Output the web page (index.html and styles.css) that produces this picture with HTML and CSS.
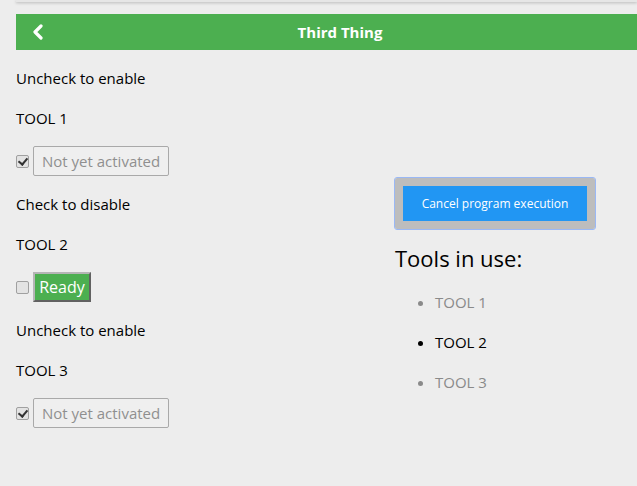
FILE: index.html
```html
<!DOCTYPE html>
<html>
<head>
<meta charset="utf-8">
<link rel="stylesheet" href="styles.css">
</head>
<body>
<div class="topstrip"></div>
<header class="header">
  <svg class="back" width="12" height="16" viewBox="0 0 12 16"><polyline points="9,2 3,8 9,14" fill="none" stroke="#fff" stroke-width="3.2" stroke-linecap="round" stroke-linejoin="round"/></svg>
  <span class="title">Third Thing</span>
</header>
<main class="main">
  <section class="left">
    <p>Uncheck to enable</p>
    <p>TOOL 1</p>
    <div class="row"><input class="cb" type="checkbox" checked><button class="btn idle">Not yet activated</button></div>
    <p>Check to disable</p>
    <p>TOOL 2</p>
    <div class="row"><input class="cb" type="checkbox"><button class="btn ready">Ready</button></div>
    <p>Uncheck to enable</p>
    <p>TOOL 3</p>
    <div class="row"><input class="cb" type="checkbox" checked><button class="btn idle">Not yet activated</button></div>
  </section>
  <section class="right">
    <button class="cancel">Cancel program execution</button>
    <h2 class="tools-title">Tools in use:</h2>
    <ul class="tools">
      <li class="off">TOOL 1</li>
      <li>TOOL 2</li>
      <li class="off">TOOL 3</li>
    </ul>
  </section>
</main>
</body>
</html>
```
FILE: styles.css
```css
html, body {
  margin: 0;
  background: #ededed;
  font-family: "Open Sans", "Noto Sans", sans-serif;
  color: #000;
}
.topstrip {
  height: 2px;
  margin-left: 16px;
  background: #e6e6e6;
  box-shadow: 0 1px 3px rgba(0,0,0,0.25);
}
.header {
  position: relative;
  margin: 12px 0 0 16px;
  padding-left: 27px;
  height: 36px;
  background: #4caf50;
  display: flex;
  align-items: center;
  justify-content: center;
}
.back {
  position: absolute;
  left: 16px;
  top: 10px;
}
.title {
  color: #fff;
  font-weight: 700;
  font-size: 15px;
}
.main {
  display: grid;
  grid-template-columns: 379px 1fr;
  padding-left: 16px;
}
.left p {
  margin: 16px 0;
  font-size: 15px;
  line-height: 24px;
}
.row {
  display: flex;
  align-items: center;
  height: 30px;
}
.cb {
  appearance: none;
  -webkit-appearance: none;
  position: relative;
  margin: 0 4px 0 0;
  width: 13px;
  height: 13px;
  box-sizing: border-box;
  border: 1px solid #a0a0a0;
  border-radius: 2px;
  background: #e3e3e3;
}
.cb:checked::after {
  content: "";
  position: absolute;
  left: 3px;
  top: 0px;
  width: 4px;
  height: 7px;
  border: solid #333;
  border-width: 0 2px 2px 0;
  transform: rotate(40deg);
}
.btn {
  height: 30px;
  font-family: inherit;
  font-size: 15px;
  white-space: nowrap;
  box-sizing: border-box;
}
.idle {
  color: #8f8f8f;
  background: #efefef;
  border: 1px solid #a9a9a9;
  border-radius: 2px;
  padding: 0 8px;
}
.ready {
  width: 58px;
  color: #fff;
  font-size: 16px;
  background: #4caf50;
  border: 2px outset #b5b5b5;
  padding: 0;
}
.right {
  padding-top: 128px;
}
.cancel {
  display: block;
  width: 200px;
  height: 51px;
  box-sizing: border-box;
  background: #2196f3;
  border: 8px solid #bdbdbd;
  outline: 1px solid #9ab8f5;
  border-radius: 2px;
  color: #fff;
  font-family: inherit;
  font-size: 12px;
  padding: 0;
}
.tools-title {
  margin: 14px 0 0;
  font-weight: 400;
  font-size: 22px;
  line-height: 30px;
}
.tools {
  margin: 19px 0 0;
  padding-left: 40px;
  font-size: 15px;
  line-height: 20px;
}
.tools li {
  margin-bottom: 20px;
}
.tools .off {
  color: #8a8a8a;
}
```
